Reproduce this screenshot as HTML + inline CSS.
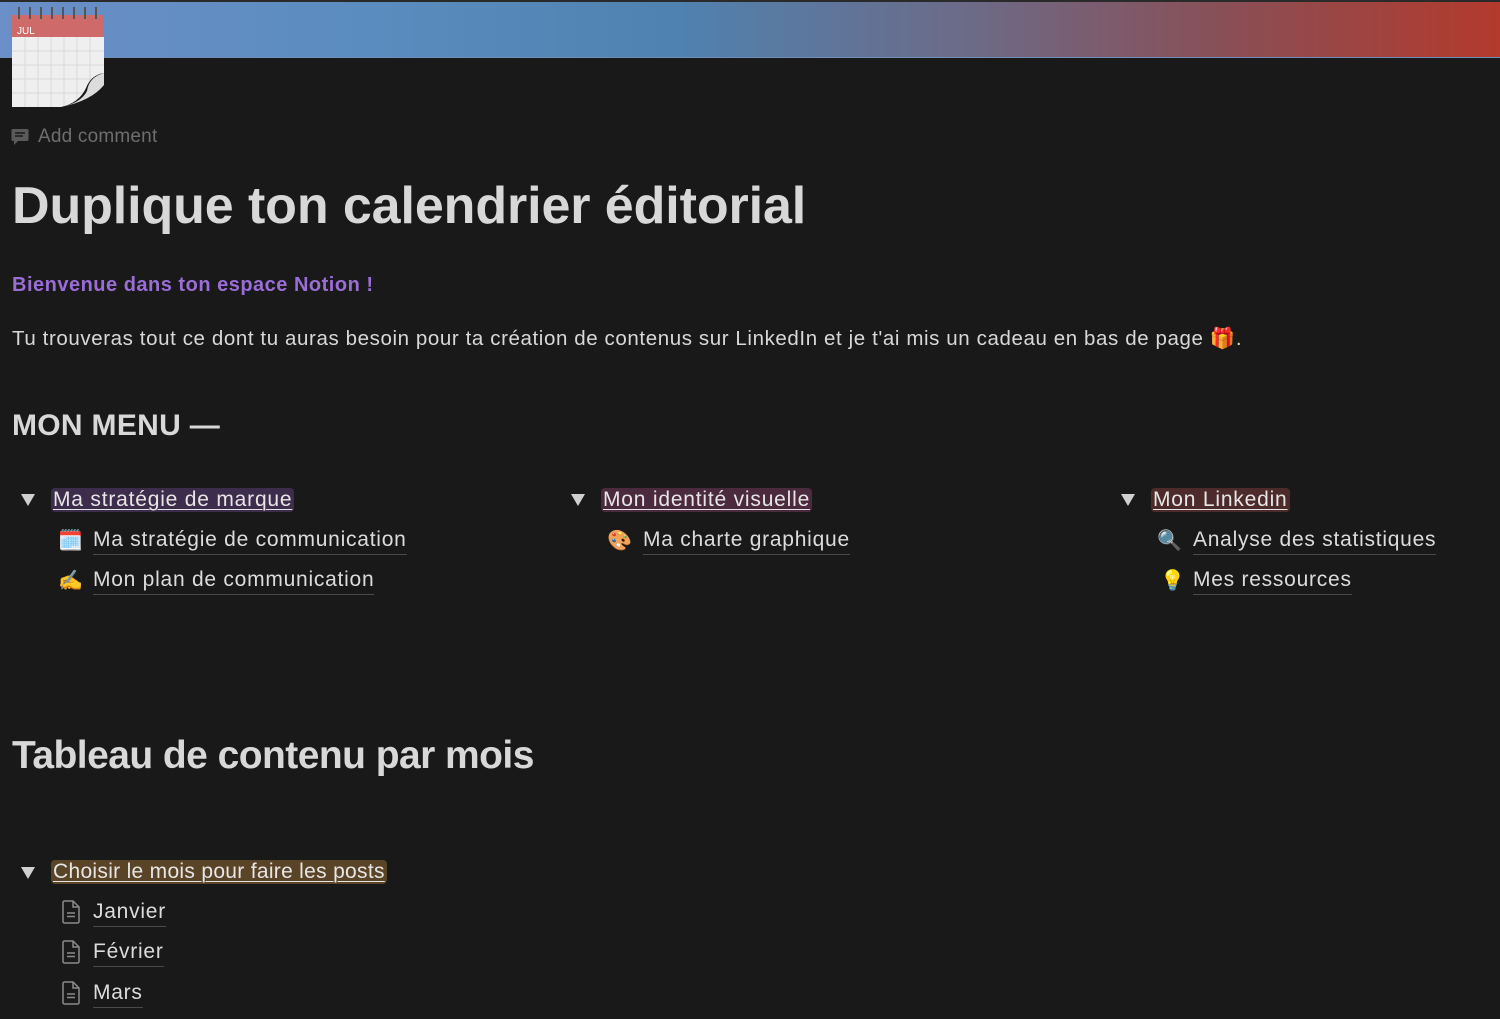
<!DOCTYPE html>
<html><head><meta charset="utf-8">
<style>
*{margin:0;padding:0;box-sizing:border-box}
body{width:1500px;height:1019px;background:#191919;overflow:hidden;font-family:"Liberation Sans",sans-serif;color:#d4d4d4;position:relative}
.banner{position:absolute;left:0;top:0;width:1500px;height:58px;background:linear-gradient(90deg,#6b8fc8 0%,#5a8cbf 25%,#4f82b0 45%,#6d6a86 65%,#8a4e55 82%,#b33a2c 100%);border-top:2px solid #2a2a2a;border-bottom:1px solid #6f8fb8}
.a{position:absolute;white-space:nowrap}
.t{font-weight:bold;color:#d8d8d8}
.tog{font-size:21px;padding:0 2px;border-radius:4px;text-decoration:underline;text-underline-offset:3px;text-decoration-thickness:1px;color:#e6e6e6;letter-spacing:0.8px}
.tri{position:absolute;width:0;height:0;border-left:7px solid transparent;border-right:7px solid transparent;border-top:12px solid #d0d0d0}
.link{font-size:21px;color:#dcdcdc;border-bottom:1px solid #4a4a4a;padding-bottom:2px;letter-spacing:0.75px}
.ic{position:absolute;font-size:20px;line-height:24px}
</style></head><body>
<div class="banner"></div>
<svg class="a" style="left:11px;top:3px" width="94" height="104" viewBox="0 0 94 104">
<rect x="1" y="12" width="92" height="92" fill="#efefef"/>
<rect x="1" y="12" width="92" height="22" fill="#cf6a6a"/>
<text x="6" y="31" font-family="Liberation Sans" font-size="10" fill="#fff">JUL</text>
<g stroke="#d8d8d8" stroke-width="1">
<line x1="1" y1="48" x2="93" y2="48"/><line x1="1" y1="62" x2="93" y2="62"/><line x1="1" y1="76" x2="93" y2="76"/><line x1="1" y1="90" x2="93" y2="90"/>
<line x1="14" y1="34" x2="14" y2="104"/><line x1="27" y1="34" x2="27" y2="104"/><line x1="40" y1="34" x2="40" y2="104"/><line x1="53" y1="34" x2="53" y2="104"/><line x1="66" y1="34" x2="66" y2="104"/><line x1="79" y1="34" x2="79" y2="104"/></g>
<path d="M93 70 Q80 72 75 85 Q68 100 50 104 L93 104Z" fill="#191919"/>
<path d="M93 70 Q78 74 76 88 Q70 100 50 104 Q80 98 93 82Z" fill="#dcdcdc"/>
<g fill="none" stroke="#555" stroke-width="2">
<path d="M8 16 V4"/><path d="M19 16 V4"/><path d="M30 16 V4"/><path d="M41 16 V4"/><path d="M52 16 V4"/><path d="M63 16 V4"/><path d="M74 16 V4"/><path d="M85 16 V4"/></g>
</svg>
<svg class="a" style="left:11px;top:128px" width="18" height="18" viewBox="0 0 18 18"><path d="M2 1h14a1.5 1.5 0 0 1 1.5 1.5v9A1.5 1.5 0 0 1 16 13H7l-4 4v-4H2A1.5 1.5 0 0 1 .5 11.5v-9A1.5 1.5 0 0 1 2 1z" fill="#5a5a5a"/><path d="M4 5h10M4 8h8" stroke="#191919" stroke-width="1.4"/></svg>
<div class="a" style="left:38px;top:126px;font-size:19px;color:#6e6e6e;letter-spacing:0.2px">Add comment</div>
<div class="a t" style="left:12px;top:176px;font-size:52px;letter-spacing:-0.1px">Duplique ton calendrier éditorial</div>
<div class="a" style="left:12px;top:274px;font-size:20px;font-weight:bold;color:#9a6dd7;letter-spacing:0.5px">Bienvenue dans ton espace Notion !</div>
<div class="a" style="left:12px;top:327px;font-size:20.5px;color:#d8d8d8;letter-spacing:0.6px">Tu trouveras tout ce dont tu auras besoin pour ta création de contenus sur LinkedIn et je t'ai mis un cadeau en bas de page 🎁.</div>
<div class="a t" style="left:12px;top:409px;font-size:30px;letter-spacing:0.3px">MON MENU —</div>

<div class="tri" style="left:21px;top:494px"></div>
<div class="a tog" style="left:51px;top:488px;background:#3d2c4c">Ma stratégie de marque</div>
<div class="ic" style="left:58px;top:529px">🗓️</div>
<div class="a link" style="left:93px;top:528px">Ma stratégie de communication</div>
<div class="ic" style="left:58px;top:569px">✍️</div>
<div class="a link" style="left:93px;top:568px">Mon plan de communication</div>

<div class="tri" style="left:571px;top:494px"></div>
<div class="a tog" style="left:601px;top:488px;background:#4b2a3e">Mon identité visuelle</div>
<div class="ic" style="left:607px;top:529px">🎨</div>
<div class="a link" style="left:643px;top:528px">Ma charte graphique</div>

<div class="tri" style="left:1121px;top:494px"></div>
<div class="a tog" style="left:1151px;top:488px;background:#4e2b2b">Mon Linkedin</div>
<div class="ic" style="left:1157px;top:529px">🔍</div>
<div class="a link" style="left:1193px;top:528px">Analyse des statistiques</div>
<div class="ic" style="left:1160px;top:569px">💡</div>
<div class="a link" style="left:1193px;top:568px">Mes ressources</div>

<div class="a t" style="left:12px;top:734px;font-size:39px;letter-spacing:-0.55px">Tableau de contenu par mois</div>

<div class="tri" style="left:21px;top:867px"></div>
<div class="a tog" style="left:51px;top:860px;background:#5a4427;letter-spacing:0.3px">Choisir le mois pour faire les posts</div>
<svg class="a" style="left:61px;top:900px" width="20" height="24" viewBox="0 0 20 24"><path d="M2 2.5A1.5 1.5 0 0 1 3.5 1H12l6 6v14.5A1.5 1.5 0 0 1 16.5 23h-13A1.5 1.5 0 0 1 2 21.5z M12 1v6h6 M6 13h8M6 16.5h8" fill="none" stroke="#8a8a8a" stroke-width="1.5"/></svg>
<div class="a link" style="left:93px;top:900px">Janvier</div>
<svg class="a" style="left:61px;top:940px" width="20" height="24" viewBox="0 0 20 24"><path d="M2 2.5A1.5 1.5 0 0 1 3.5 1H12l6 6v14.5A1.5 1.5 0 0 1 16.5 23h-13A1.5 1.5 0 0 1 2 21.5z M12 1v6h6 M6 13h8M6 16.5h8" fill="none" stroke="#8a8a8a" stroke-width="1.5"/></svg>
<div class="a link" style="left:93px;top:940px">Février</div>
<svg class="a" style="left:61px;top:981px" width="20" height="24" viewBox="0 0 20 24"><path d="M2 2.5A1.5 1.5 0 0 1 3.5 1H12l6 6v14.5A1.5 1.5 0 0 1 16.5 23h-13A1.5 1.5 0 0 1 2 21.5z M12 1v6h6 M6 13h8M6 16.5h8" fill="none" stroke="#8a8a8a" stroke-width="1.5"/></svg>
<div class="a link" style="left:93px;top:981px">Mars</div>
</body></html>
